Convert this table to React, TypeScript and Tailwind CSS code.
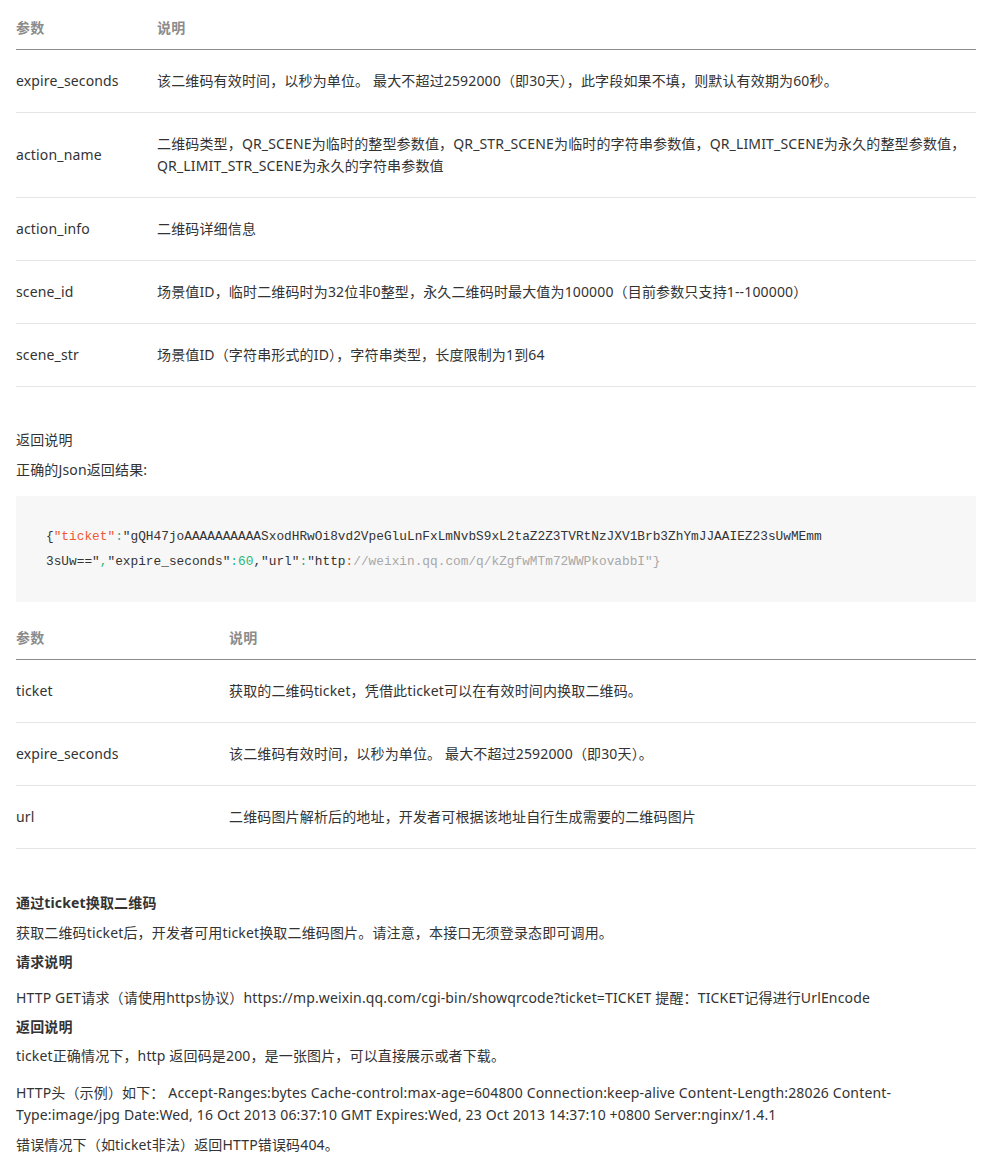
const params1 = [
  {
    name: "expire_seconds",
    desc: "该二维码有效时间，以秒为单位。 最大不超过2592000（即30天），此字段如果不填，则默认有效期为60秒。",
  },
  {
    name: "action_name",
    desc: "二维码类型，QR_SCENE为临时的整型参数值，QR_STR_SCENE为临时的字符串参数值，QR_LIMIT_SCENE为永久的整型参数值，QR_LIMIT_STR_SCENE为永久的字符串参数值",
  },
  { name: "action_info", desc: "二维码详细信息" },
  {
    name: "scene_id",
    desc: "场景值ID，临时二维码时为32位非0整型，永久二维码时最大值为100000（目前参数只支持1--100000）",
  },
  { name: "scene_str", desc: "场景值ID（字符串形式的ID），字符串类型，长度限制为1到64" },
];

const params2 = [
  { name: "ticket", desc: "获取的二维码ticket，凭借此ticket可以在有效时间内换取二维码。" },
  { name: "expire_seconds", desc: "该二维码有效时间，以秒为单位。 最大不超过2592000（即30天）。" },
  { name: "url", desc: "二维码图片解析后的地址，开发者可根据该地址自行生成需要的二维码图片" },
];

type Row = { name: string; desc: string };

function ParamTable({ rows, col, headPad }: { rows: Row[]; col: string; headPad: string }) {
  return (
    <div className="w-full">
      <div className={`flex border-b border-[#8c8c8c] pb-[10px] ${headPad} text-[14px] font-bold leading-[22px] text-[#8c8c8c]`}>
        <div className={col}>参数</div>
        <div className="flex-1">说明</div>
      </div>
      {rows.map((r) => (
        <div key={r.name} className="flex items-center border-b border-[#e5e5e5] py-5 leading-[22px]">
          <div className={col}>{r.name}</div>
          <div className="flex-1 pr-2">{r.desc}</div>
        </div>
      ))}
    </div>
  );
}

export default function App() {
  return (
    <div className="min-h-[1176px] bg-white px-4 text-[14px] tracking-[0.15px] text-[#333] font-['Noto_Sans','Noto_Sans_CJK_SC',sans-serif]">
      <ParamTable rows={params1} col="w-[141px] shrink-0" headPad="pt-[17px]" />

      <p className="mt-[42px] leading-[22px]">返回说明</p>
      <p className="mt-2 leading-[22px]">正确的Json返回结果:</p>

      <pre className="mt-[15px] bg-[#f7f7f7] px-[30px] py-[28px] text-[12.8px] leading-[24px] tracking-normal text-[#333] font-['DejaVu_Sans_Mono',monospace]">
        <code>
          {"{"}
          <span className="text-[#ec5a32]">"ticket"</span>
          <span className="text-[#22b59a]">:</span>
          "gQH47joAAAAAAAAAASxodHRwOi8vd2VpeGluLnFxLmNvbS9xL2taZ2Z3TVRtNzJXV1Brb3ZhYmJJAAIEZ23sUwMEmm
          {"\n"}3sUw=="<span className="text-[#2eb872]">,</span>"expire_seconds"
          <span className="text-[#22b59a]">:</span>
          <span className="text-[#2eb872]">60</span>,"url"
          <span className="text-[#22b59a]">:</span>"http
          <span className="text-[#ec5a32]">:</span>
          <span className="text-[#a8a8a8]">//weixin.qq.com/q/kZgfwMTm72WWPkovabbI"{"}"}</span>
        </code>
      </pre>

      <ParamTable rows={params2} col="w-[213px] shrink-0" headPad="pt-[25px]" />

      <p className="mt-[43px] font-bold leading-[22px]">通过ticket换取二维码</p>
      <p className="mt-2 leading-[22px]">获取二维码ticket后，开发者可用ticket换取二维码图片。请注意，本接口无须登录态即可调用。</p>
      <p className="mt-[7px] font-bold leading-[22px]">请求说明</p>
      <p className="mt-[14px] leading-[22px]">
        HTTP GET请求（请使用https协议）https://mp.weixin.qq.com/cgi-bin/showqrcode?ticket=TICKET 提醒：TICKET记得进行UrlEncode
      </p>
      <p className="mt-[7px] font-bold leading-[22px]">返回说明</p>
      <p className="mt-[7px] leading-[22px]">ticket正确情况下，http 返回码是200，是一张图片，可以直接展示或者下载。</p>
      <p className="mt-[15px] leading-[22px]">
        HTTP头（示例）如下： Accept-Ranges:bytes Cache-control:max-age=604800 Connection:keep-alive Content-Length:28026 Content-
        <br />
        Type:image/jpg Date:Wed, 16 Oct 2013 06:37:10 GMT Expires:Wed, 23 Oct 2013 14:37:10 +0800 Server:nginx/1.4.1
      </p>
      <p className="mt-2 leading-[22px]">错误情况下（如ticket非法）返回HTTP错误码404。</p>
    </div>
  );
}
